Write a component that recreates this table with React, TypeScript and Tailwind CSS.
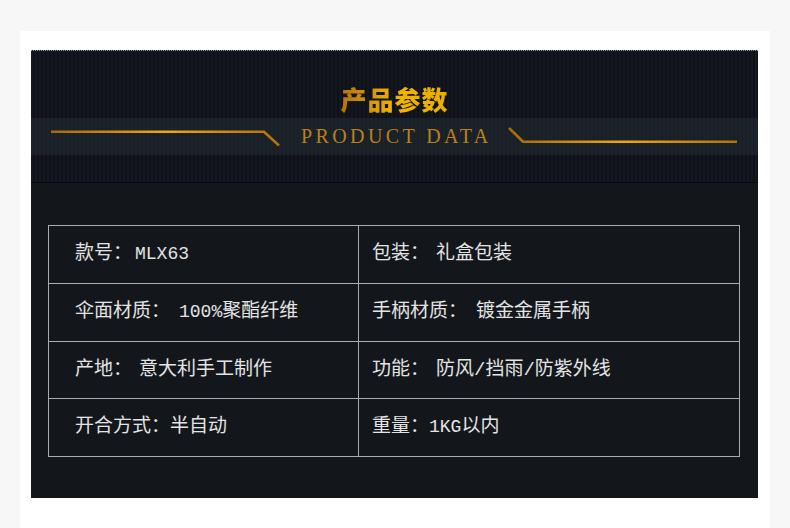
import React from 'react';

interface Param {
  label: string;
  value: React.ReactNode;
  gap: string;
}

const Latin: React.FC<{ children: React.ReactNode }> = ({ children }) => (
  <span className="text-[18px]">{children}</span>
);

const rows: { left: Param; right: Param; h: string }[] = [
  {
    left: { label: '款号：', value: <Latin>MLX63</Latin>, gap: 'ml-[3px]' },
    right: { label: '包装：', value: '礼盒包装', gap: 'ml-[7px]' },
    h: 'h-[58px]',
  },
  {
    left: { label: '伞面材质：', value: <><Latin>100%</Latin>聚酯纤维</>, gap: 'ml-[9px]' },
    right: { label: '手柄材质：', value: '镀金金属手柄', gap: 'ml-[9px]' },
    h: 'h-[58px]',
  },
  {
    left: { label: '产地：', value: '意大利手工制作', gap: 'ml-[7px]' },
    right: { label: '功能：', value: '防风/挡雨/防紫外线', gap: 'ml-[7px]' },
    h: 'h-[57px]',
  },
  {
    left: { label: '开合方式：', value: '半自动', gap: 'ml-[0px]' },
    right: { label: '重量：', value: <><Latin>1KG</Latin>以内</>, gap: 'ml-[0px]' },
    h: 'h-[57px]',
  },
];

const GoldLine: React.FC<{ side: 'left' | 'right' }> = ({ side }) => {
  const id = `gold-${side}`;
  return (
    <svg width="229" height="37" viewBox="0 0 229 37" className="flex-shrink-0">
      <defs>
        <linearGradient id={id} x1="0" x2="1" y1="0" y2="0">
          <stop offset="0" stopColor="#a9680a" />
          <stop offset="0.5" stopColor="#efa80a" />
          <stop offset="1" stopColor="#b2700a" />
        </linearGradient>
      </defs>
      {side === 'left' ? (
        <polyline points="0,13.8 213,13.8 228,27.5" fill="none" stroke={`url(#${id})`} strokeWidth="2.6" />
      ) : (
        <polyline points="1,10 15,23.8 229,23.8" fill="none" stroke={`url(#${id})`} strokeWidth="2.6" />
      )}
    </svg>
  );
};

const ParamCell: React.FC<{ p: Param; className: string }> = ({ p, className }) => (
  <div className={`flex items-center whitespace-nowrap ${className}`}>
    <span>{p.label}</span>
    <span className={p.gap}>{p.value}</span>
  </div>
);

export default function App() {
  return (
    <div className="min-h-screen bg-[#f7f7f7] pt-[31px] px-[20px]">
      <div className="bg-white pt-[19px] pl-[11px] pr-[12px] pb-[40px]">
        {/* header */}
        <div className="bg-[repeating-linear-gradient(90deg,#141720_0px,#141720_2px,#0f1118_2px,#0f1118_4px)]">
          <div className="h-px bg-[repeating-linear-gradient(90deg,#9a9ca3_0px,#9a9ca3_1px,#1a1c24_1px,#1a1c24_2px)]" />
          <div className="h-[67px] pt-[33px] flex justify-center">
            <span
              className="text-[26px] leading-[30px] font-black tracking-[1px] bg-gradient-to-r from-[#b47208] via-[#f0b400] to-[#eab000] bg-clip-text text-transparent"
              style={{ fontFamily: '"Noto Sans CJK SC", sans-serif' }}
            >
              产品参数
            </span>
          </div>
          <div className="h-[37px] flex items-center pl-[20px] bg-[repeating-linear-gradient(90deg,#1d232a_0px,#1d232a_2px,#191f26_2px,#191f26_4px)]">
            <GoldLine side="left" />
            <span
              className="ml-[21px] mr-[16px] text-[20px] leading-[37px] tracking-[3.4px] text-[#bb8019] whitespace-nowrap"
              style={{ fontFamily: '"Liberation Serif", serif' }}
            >
              PRODUCT DATA
            </span>
            <GoldLine side="right" />
          </div>
          <div className="h-[27px]" />
          <div className="h-px bg-[#07080c]" />
        </div>

        {/* table */}
        <div className="bg-[#13171b] pt-[42px] pb-[41px] pl-[17px] pr-[18px]">
          <div
            className="border border-[#a9acb2] text-[19px] text-[#e4e4e4]"
            style={{ fontFamily: '"Liberation Mono", "Noto Sans CJK SC", monospace' }}
          >
            {rows.map((r, i) => (
              <div
                key={i}
                className={`grid grid-cols-[310px_1fr] ${r.h} ${i === rows.length - 1 ? '' : 'border-b border-[#a9acb2]'}`}
              >
                <ParamCell p={r.left} className="pl-[26px] border-r border-[#a9acb2]" />
                <ParamCell p={r.right} className="pl-[13px]" />
              </div>
            ))}
          </div>
        </div>
      </div>
    </div>
  );
}
